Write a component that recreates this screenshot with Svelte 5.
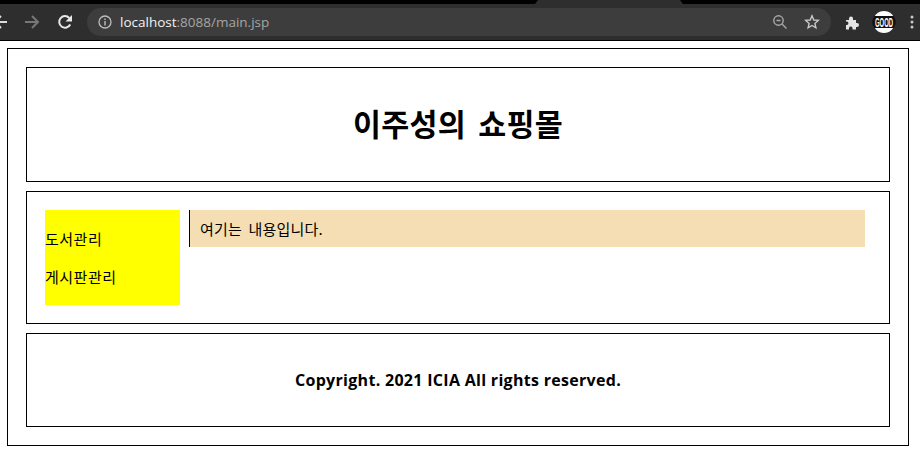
<script>
    const menus = ["도서관리", "게시판관리"];
</script>

<div class="chrome">
    <div class="topstrip"><div class="tab"></div></div>
    <div class="toolbar">
        <svg class="nav-back" width="14" height="16" viewBox="0 0 14 16"><path d="M14 8H2M8 2 2 8l6 6" fill="none" stroke="#dcdcdc" stroke-width="2"/></svg>
        <svg class="nav-forward" width="16" height="16" viewBox="0 0 16 16"><path d="M1 8h13M8 2l6 6-6 6" fill="none" stroke="#777" stroke-width="2"/></svg>
        <svg class="nav-reload" width="16" height="16" viewBox="0 0 16 16"><path d="M13.200 10.500A5.800 5.800 0 1 1 12.300 4" fill="none" stroke="#e8e8e8" stroke-width="2"/><path d="M15 1v6.500H8.500z" fill="#e8e8e8"/></svg>
        <div class="omnibox">
            <svg class="info" width="14" height="14" viewBox="0 0 14 14"><circle cx="7" cy="7" r="6" fill="none" stroke="#bdbdbd" stroke-width="1.300"/><path d="M7 6v4.500M7 3.500v1.400" stroke="#bdbdbd" stroke-width="1.400"/></svg>
            <span class="url"><span class="host">localhost</span>:8088/main.jsp</span>
            <span class="spacer"></span>
            <svg width="16" height="16" viewBox="0 0 16 16"><circle cx="6.500" cy="6.500" r="4.700" fill="none" stroke="#a8a8a8" stroke-width="1.400"/><path d="M10 10l4.500 4.500M4.500 6.500h4" stroke="#a8a8a8" stroke-width="1.400"/></svg>
            <svg class="star" width="16" height="16" viewBox="0 0 16 16"><path d="M8 1.800l1.800 4.200 4.500.4-3.400 3 1 4.400L8 11.500l-3.900 2.300 1-4.400-3.400-3 4.500-.4z" fill="none" stroke="#c8c8c8" stroke-width="1.400"/></svg>
        </div>
        <svg class="puzzle" width="16" height="16" viewBox="0 0 16 16"><path d="M1 6h3V4.500a2 2 0 0 1 4 0V6h3v3h1a2 2 0 0 1 0 4h-1v2.500H7.500V14a1.800 1.800 0 0 0-3.500 0v1.500H1V11h1a1.800 1.800 0 0 0 0-3.500H1z" fill="#e4e4e4"/></svg>
        <svg class="avatar" width="22" height="22" viewBox="0 0 22 22">
            <circle cx="11" cy="11" r="11" fill="#fff"/>
            <path d="M1.200 5h19.600a11 11 0 0 1 0 12H1.200a11 11 0 0 1 0-12z" fill="#111"/>
            <text x="11" y="15.500" text-anchor="middle" textLength="18" lengthAdjust="spacingAndGlyphs">GOOD</text>
        </svg>
        <svg class="dots" width="4" height="14" viewBox="0 0 4 14"><circle cx="2" cy="2" r="1.500" fill="#c8c8c8"/><circle cx="2" cy="7" r="1.500" fill="#c8c8c8"/><circle cx="2" cy="12" r="1.500" fill="#c8c8c8"/></svg>
    </div>
</div>

<div class="wrap">
    <header class="box head">
        <h1>이주성의 쇼핑몰</h1>
    </header>
    <section class="box middle">
        <nav>
            {#each menus as menu}
                <p>{menu}</p>
            {/each}
        </nav>
        <div class="content">여기는 내용입니다.</div>
    </section>
    <footer class="box foot">
        <h4>Copyright. 2021 ICIA All rights reserved.</h4>
    </footer>
</div>

<style>
    :global(body)
    {
        margin: 0;
        background: #fff;
        overflow: hidden;
        font-family: "Noto Sans CJK KR", "Noto Sans", sans-serif;
        color: #000;
    }

    .chrome
    {
        height: 41px;
        background: #000;
        overflow: hidden;
    }

    .topstrip
    {
        height: 4px;
        padding-left: 535px;
        background: #000;
    }

    .tab
    {
        width: 148px;
        height: 4px;
        background: #2e2e2e;
        clip-path: polygon(3px 0, 145px 0, 148px 100%, 0 100%);
    }

    .toolbar
    {
        height: 36px;
        box-sizing: border-box;
        background: #2e2e2e;
        display: flex;
        align-items: center;
    }

    .nav-back
    {
        margin-left: -7px;
    }

    .nav-forward
    {
        margin-left: 17px;
    }

    .nav-reload
    {
        margin-left: 17px;
    }

    .omnibox
    {
        margin-left: 14px;
        width: 744px;
        height: 28px;
        border-radius: 14px;
        background: #3d3d3d;
        display: flex;
        align-items: center;
        padding: 0 10px 0 11px;
        box-sizing: border-box;
    }

    .url
    {
        margin-left: 8px;
        font-family: "Open Sans", sans-serif;
        font-size: 13.500px;
        color: #a5a5a5;
        white-space: nowrap;
    }

    .host
    {
        color: #f2f2f2;
    }

    .spacer
    {
        flex: 1;
    }

    .star
    {
        margin-left: 16px;
        margin-right: 1px;
    }

    .puzzle
    {
        margin-left: 14px;
    }

    .avatar
    {
        margin-left: 12px;
        overflow: visible;
    }

    .avatar text
    {
        fill: #fff;
        font-family: "Liberation Sans", sans-serif;
        font-size: 12px;
        font-weight: 700;
    }

    .dots
    {
        margin-left: 15px;
    }

    .wrap
    {
        box-sizing: border-box;
        width: 902px;
        height: 398px;
        margin: 7px 0 0 7px;
        padding: 18px;
        border: 1px solid #000;
        display: flex;
        flex-direction: column;
        gap: 9px;
    }

    .box
    {
        box-sizing: border-box;
        border: 1px solid #000;
        width: 864px;
    }

    .head
    {
        height: 115px;
        padding-bottom: 4px;
        display: flex;
        align-items: center;
        justify-content: center;
    }

    h1
    {
        margin: 0;
        font-size: 30.400px;
        font-weight: 700;
        line-height: 40px;
        letter-spacing: 0.300px;
        word-spacing: 5px;
    }

    .middle
    {
        height: 133px;
        padding: 18px 24px 18px 18px;
        display: flex;
        align-items: flex-start;
        gap: 9px;
    }

    nav
    {
        width: 135px;
        height: 95px;
        background: #ff0;
        padding-top: 19px;
        box-sizing: border-box;
        font-size: 15px;
        letter-spacing: 0.500px;
        line-height: 20px;
    }

    nav p
    {
        margin: 0 0 18px;
    }

    .content
    {
        flex: 1;
        height: 37px;
        box-sizing: border-box;
        background: wheat;
        border-left: 1px solid #000;
        padding-left: 10px;
        font-size: 15px;
        letter-spacing: 0.200px;
        word-spacing: 3px;
        line-height: 37px;
    }

    .foot
    {
        height: 94px;
        display: flex;
        align-items: center;
        justify-content: center;
    }

    h4
    {
        margin: 0;
        font-family: "Open Sans", "Noto Sans CJK KR", sans-serif;
        font-size: 16px;
        font-weight: 700;
        line-height: 22px;
        letter-spacing: 0.300px;
    }
</style>
